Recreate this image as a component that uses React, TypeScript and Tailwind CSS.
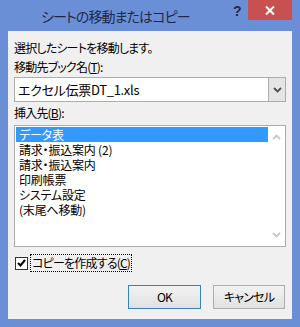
import React from "react";

const jp = "font-['Noto_Sans_CJK_JP','Noto_Sans',sans-serif] [font-feature-settings:'palt']";

const sheets = ["データ表", "請求・振込案内 (2)", "請求・振込案内", "印刷帳票", "システム設定", "(末尾へ移動)"];

function Chevron({ up, className }: { up?: boolean; className?: string }) {
  return (
    <svg width="9" height="6" viewBox="0 0 9 6" className={className}>
      <path
        d={up ? "M1 5 L4.5 1.5 L8 5" : "M1 1 L4.5 4.5 L8 1"}
        fill="none"
        stroke="currentColor"
        strokeWidth="1.8"
      />
    </svg>
  );
}

export default function App() {
  return (
    <div className={`w-[300px] h-[327px] bg-[#6b8fd6] flex flex-col ${jp}`}>
      {/* title bar */}
      <div className="h-[31px] flex items-start shrink-0">
        <div className="pl-[41px] pt-[7px] text-[14px] leading-[18px] tracking-[-0.9px] text-[#1c2a48]">
          シートの移動またはコピー
        </div>
        <div className="ml-auto flex items-start">
          <div className="w-[14px] mr-[1px] pt-[3px] text-[14px] leading-[16px] font-bold text-[#1b2b4a] font-['Liberation_Sans',sans-serif]">
            ?
          </div>
          <div className="w-[44px] h-[20px] bg-[#c75050] flex items-center justify-center text-white mr-[8px]">
            <svg width="10" height="9" viewBox="0 0 10 9">
              <path d="M1 0.5 L9 8.5 M9 0.5 L1 8.5" stroke="white" strokeWidth="2" />
            </svg>
          </div>
        </div>
      </div>

      {/* client */}
      <div className="flex-1 mx-[8px] mb-[8px] bg-[#f0f0f0] px-[6px] text-[12px] tracking-[-0.8px] text-black flex flex-col">
        <div className="mt-[8px] h-[17px] leading-[17px]">選択したシートを移動します。</div>
        <div className="mt-[2px] h-[17px] leading-[17px]">
          移動先ブック名(<span className="underline">T</span>):
        </div>

        <div className="mt-[2px] h-[25px] border border-[#acacac] bg-white flex">
          <div className="flex-1 pl-[3px] leading-[23px] text-[13px] tracking-[-0.3px]">エクセル伝票DT_1.xls</div>
          <div className="w-[17px] border-l border-[#acacac] bg-[#e5e5e5] flex items-center justify-center text-[#505050]">
            <Chevron />
          </div>
        </div>

        <div className="mt-[2px] h-[17px] leading-[17px]">
          挿入先(<span className="underline">B</span>):
        </div>

        <div className="mt-[4px] h-[122px] border border-[#acacac] bg-white flex">
          <div className="flex-1 pt-[1px] pl-[1px] text-[12px] tracking-[-0.2px]">
            {sheets.map((s, i) => (
              <div
                key={s}
                className={`h-[15px] leading-[15px] pl-[3px] ${i === 0 ? "bg-[#3399ff] text-white" : ""}`}
              >
                {s}
              </div>
            ))}
          </div>
          <div className="w-[17px] flex flex-col items-center justify-between py-[8px] text-[#c8c8c8]">
            <Chevron up />
            <Chevron />
          </div>
        </div>

        <div className="mt-[7px] h-[18px] flex items-center">
          <div className="w-[13px] h-[13px] border border-[#333] bg-white flex items-center justify-center ml-[1px]">
            <svg width="9" height="8" viewBox="0 0 9 8">
              <path d="M1 4 L3.5 6.5 L8 1" fill="none" stroke="black" strokeWidth="2" />
            </svg>
          </div>
          <div className="ml-[2px] h-[18px] border border-dotted border-black px-[1px] leading-[16px]">
            コピーを作成する(<span className="underline">C</span>)
          </div>
        </div>

        <div className="mt-[13px] flex justify-end gap-[12px] pr-[1px]">
          <button className="w-[73px] h-[24px] border border-[#3c7fb1] bg-gradient-to-b from-[#f2f2f2] to-[#e1e1e1] text-[12px] leading-[22px]">
            OK
          </button>
          <button className="w-[72px] h-[24px] border border-[#acacac] bg-gradient-to-b from-[#f2f2f2] to-[#e1e1e1] text-[12px] leading-[22px]">
            キャンセル
          </button>
        </div>
      </div>
    </div>
  );
}
